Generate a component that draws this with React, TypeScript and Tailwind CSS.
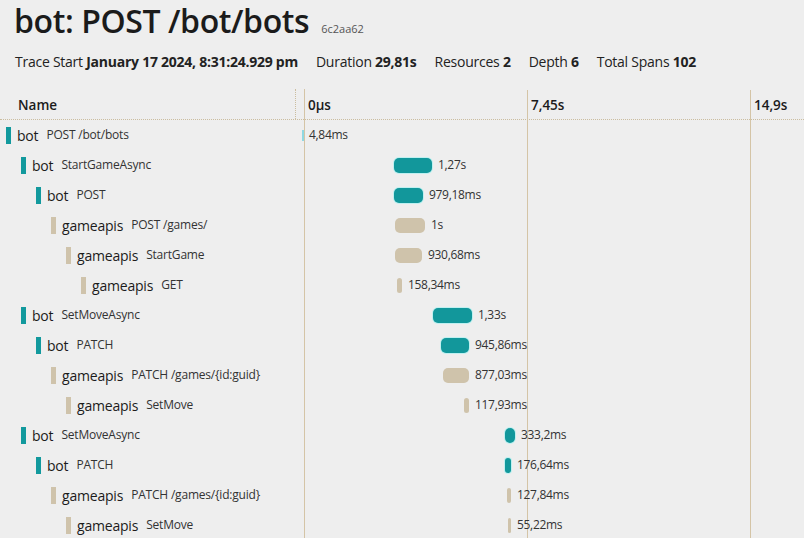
import React from "react";

type Row = {
  d: number;
  svc: string;
  name: string;
  kind: "bot" | "api" | "root";
  left: number;
  w: number;
  label: string;
};

const rows: Row[] = [
  { d: 0, svc: "bot", name: "POST /bot/bots", kind: "root", left: -3, w: 2, label: "4,84ms" },
  { d: 1, svc: "bot", name: "StartGameAsync", kind: "bot", left: 89, w: 38, label: "1,27s" },
  { d: 2, svc: "bot", name: "POST", kind: "bot", left: 89, w: 29, label: "979,18ms" },
  { d: 3, svc: "gameapis", name: "POST /games/", kind: "api", left: 90, w: 30, label: "1s" },
  { d: 4, svc: "gameapis", name: "StartGame", kind: "api", left: 90, w: 27, label: "930,68ms" },
  { d: 5, svc: "gameapis", name: "GET", kind: "api", left: 92, w: 5, label: "158,34ms" },
  { d: 1, svc: "bot", name: "SetMoveAsync", kind: "bot", left: 128, w: 39, label: "1,33s" },
  { d: 2, svc: "bot", name: "PATCH", kind: "bot", left: 136, w: 28, label: "945,86ms" },
  { d: 3, svc: "gameapis", name: "PATCH /games/{id:guid}", kind: "api", left: 138, w: 26, label: "877,03ms" },
  { d: 4, svc: "gameapis", name: "SetMove", kind: "api", left: 159, w: 5, label: "117,93ms" },
  { d: 1, svc: "bot", name: "SetMoveAsync", kind: "bot", left: 200, w: 10, label: "333,2ms" },
  { d: 2, svc: "bot", name: "PATCH", kind: "bot", left: 200, w: 6, label: "176,64ms" },
  { d: 3, svc: "gameapis", name: "PATCH /games/{id:guid}", kind: "api", left: 202, w: 4, label: "127,84ms" },
  { d: 4, svc: "gameapis", name: "SetMove", kind: "api", left: 203, w: 3, label: "55,22ms" },
];

const indent = ["pl-[6px]", "pl-[21px]", "pl-[36px]", "pl-[51px]", "pl-[66px]", "pl-[81px]"];

export default function App() {
  return (
    <div
      className="w-[804px] h-[538px] overflow-hidden bg-[#eeeeee] text-[#1f1f1f]"
      style={{ fontFamily: '"Open Sans", "Noto Sans", sans-serif' }}
    >
      <div className="pl-[14px] pt-[2px] flex items-baseline h-[40px]">
        <h1 className="text-[32px] font-semibold tracking-[-0.4px] leading-[38px] text-[#1b1b1b]">
          bot: POST /bot/bots
        </h1>
        <span className="ml-[12px] text-[11px] text-[#555]">6c2aa62</span>
      </div>
      <div className="pl-[15px] mt-[11px] h-[20px] flex items-center gap-[18px] text-[14px] text-[#222] tracking-[-0.25px]">
        <span>
          Trace Start <b className="font-bold">January 17 2024, 8:31:24.929 pm</b>
        </span>
        <span>
          Duration <b className="font-bold">29,81s</b>
        </span>
        <span>
          Resources <b className="font-bold">2</b>
        </span>
        <span>
          Depth <b className="font-bold">6</b>
        </span>
        <span>
          Total Spans <b className="font-bold">102</b>
        </span>
      </div>

      <div className="relative mt-[18px]">
        {/* grid lines */}
        <div className="absolute left-[304px] top-0 bottom-0 w-px bg-[#d4c4a6]" />
        <div className="absolute left-[527px] top-[1px] bottom-0 w-px bg-[#d4c4a6]" />
        <div className="absolute left-[750px] top-[1px] bottom-0 w-px bg-[#d4c4a6]" />

        {/* header */}
        <div className="flex h-[31px] border-b border-dotted border-[#cbbd9f] text-[13.5px] font-semibold text-[#1b1b1b]">
          <div className="w-[296px] border-r border-dotted border-[#cbbd9f] flex items-center pl-[18px] pt-[2px]">Name</div>
          <div className="w-[9px]" />
          <div className="flex-1 flex items-center pl-[3px] pt-[2px]">
            <div className="w-[223px]">0µs</div>
            <div className="w-[223px]">7,45s</div>
            <div>14,9s</div>
          </div>
        </div>

        {rows.map((r, i) => (
          <div key={i} className="flex h-[30px]">
            <div className={`w-[305px] flex items-center ${indent[r.d]}`}>
              <div
                className={`w-[5px] h-[17px] ${r.kind === "api" ? "bg-[#cfc3ab]" : "bg-[#12999d]"}`}
              />
              <span className="ml-[6px] text-[14px] text-[#1b1b1b] tracking-[-0.2px]">{r.svc}</span>
              <span className="ml-[8px] text-[12px] text-[#333] tracking-[-0.2px]">{r.name}</span>
            </div>
            <div className="relative flex-1">
              <div
                className="absolute top-0 h-full flex items-center"
                style={{ left: r.left }}
              >
                <div
                  className={
                    r.kind === "root"
                      ? "h-[11px] bg-[#8fd8e2]"
                      : r.kind === "bot"
                      ? "h-[15px] rounded-[5px] bg-[#12979b] shadow-[0_0_0_1px_#bff0f0]"
                      : "h-[15px] rounded-[5px] bg-[#cfc3ab]"
                  }
                  style={{ width: r.w }}
                />
                <span className={`${r.kind === "root" ? "ml-[5px]" : "ml-[6px]"} text-[12px] text-[#333] tracking-[-0.3px] whitespace-nowrap`}>
                  {r.label}
                </span>
              </div>
            </div>
          </div>
        ))}
      </div>
    </div>
  );
}
